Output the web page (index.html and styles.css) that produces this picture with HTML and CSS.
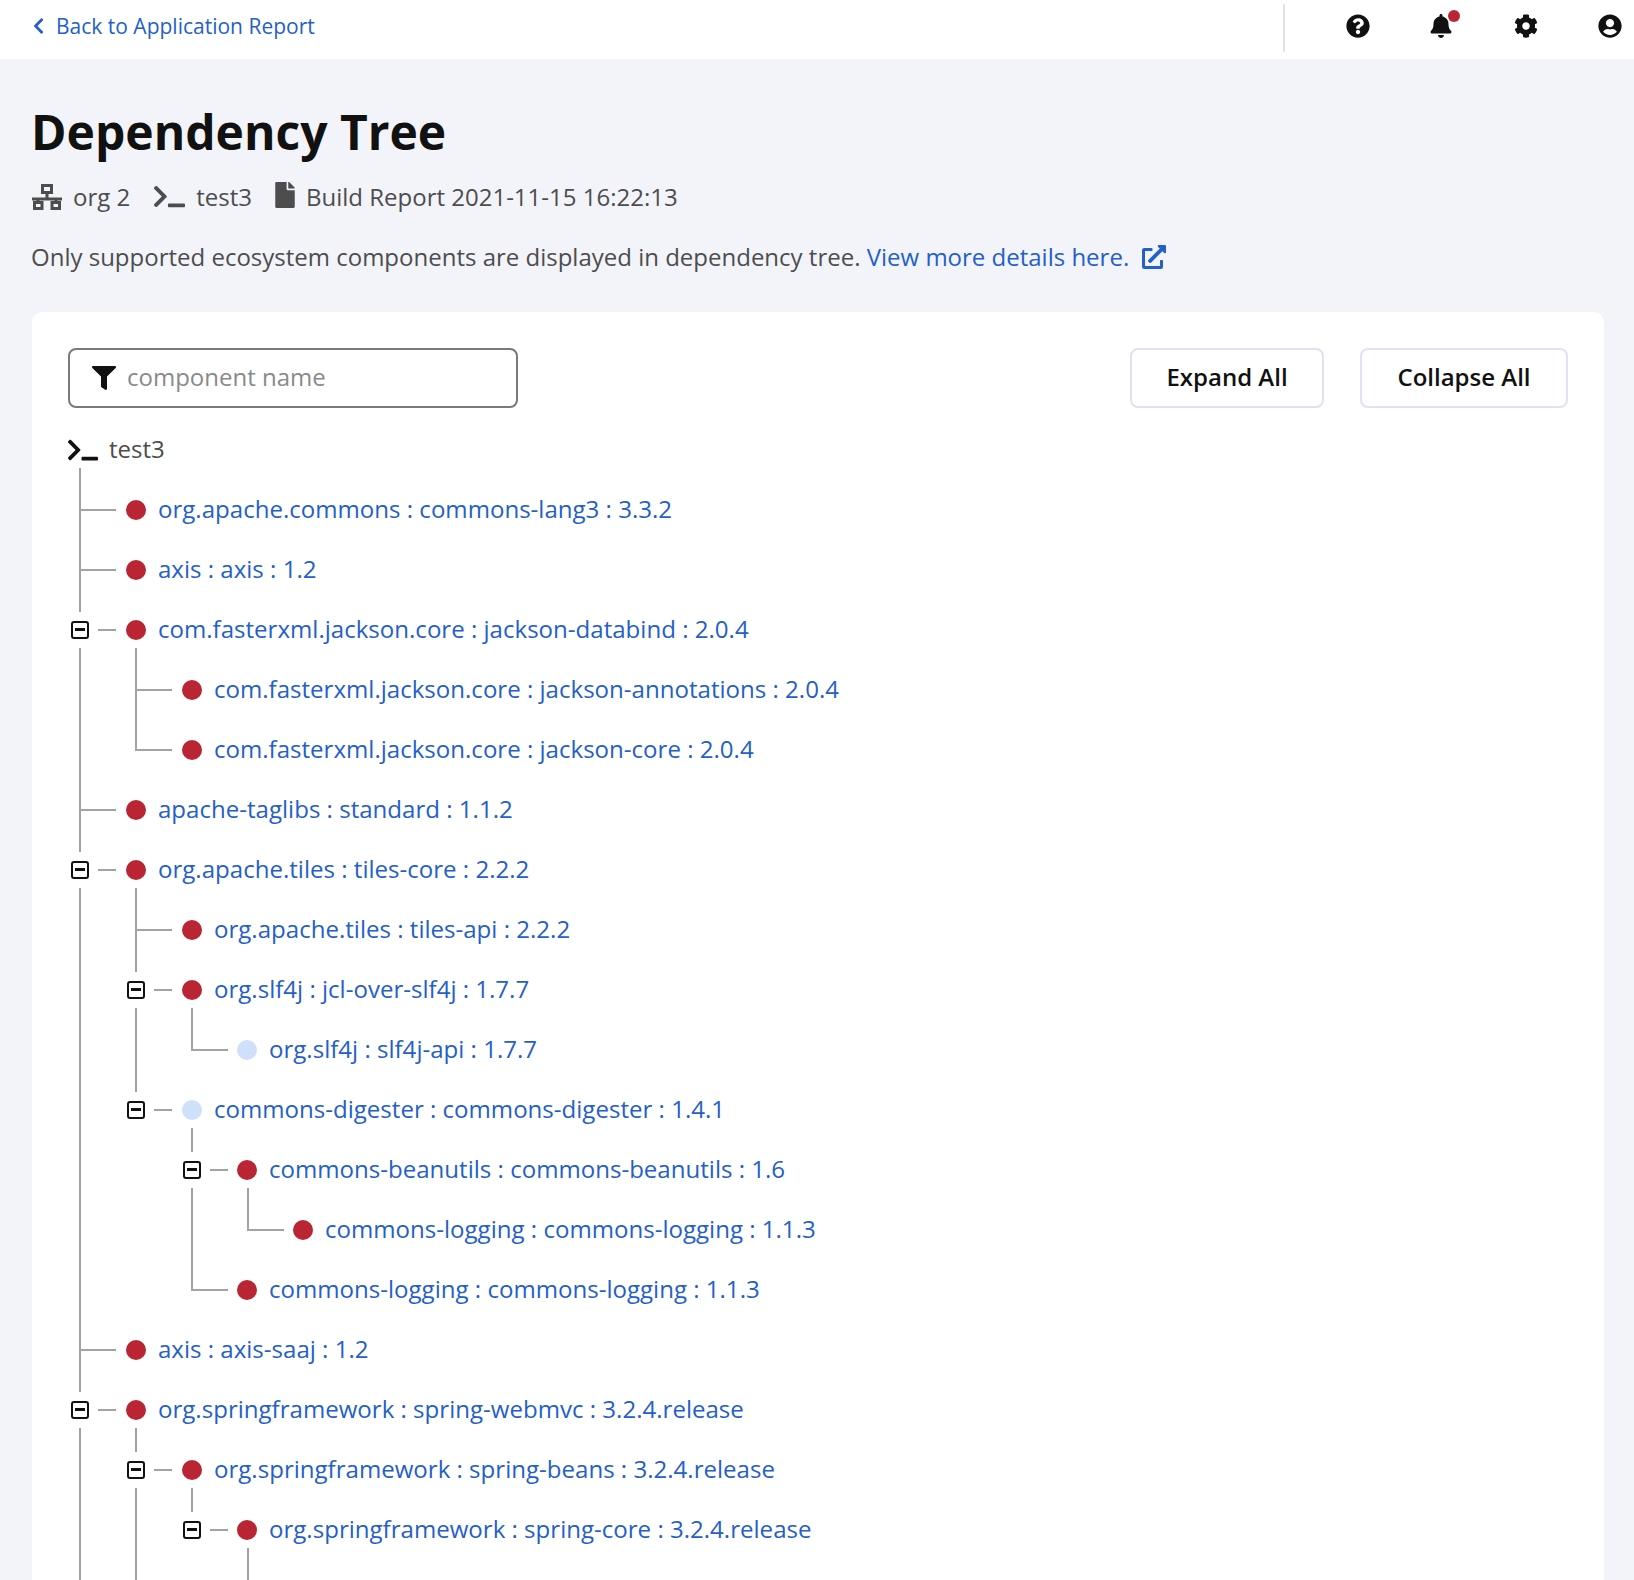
FILE: index.html
```html
<!DOCTYPE html>
<html lang="en">
<head>
    <meta charset="UTF-8">
    <meta name="viewport" content="width=device-width, initial-scale=1.0">
    <title>Dependency Tree</title>
    <link rel="stylesheet" href="styles.css">
</head>
<body>
    <header class="topbar">
        <a class="back" href="#">
            <svg class="back-icon" viewBox="0 0 320 512"><path d="M34.52 239.03L228.87 44.69c9.37-9.37 24.57-9.37 33.94 0l22.67 22.67c9.36 9.36 9.37 24.52.04 33.9L131.49 256l154.02 154.75c9.34 9.38 9.32 24.54-.04 33.9l-22.67 22.67c-9.37 9.37-24.57 9.37-33.94 0L34.52 272.97c-9.37-9.37-9.37-24.57 0-33.94z"/></svg>
            Back to Application Report
        </a>
        <div class="topbar-icons">
            <svg class="top-icon" viewBox="0 0 512 512"><path d="M504 256c0 136.997-111.043 248-248 248S8 392.997 8 256C8 119.083 119.043 8 256 8s248 111.083 248 248zM262.655 90c-54.497 0-89.255 22.957-116.549 63.758-3.536 5.286-2.353 12.415 2.715 16.258l34.699 26.31c5.205 3.947 12.621 3.008 16.665-2.122 17.864-22.658 30.113-35.797 57.303-35.797 20.429 0 45.698 13.148 45.698 32.958 0 14.976-12.363 22.667-32.534 33.976C247.128 238.528 216 254.941 216 296v4c0 6.627 5.373 12 12 12h56c6.627 0 12-5.373 12-12v-1.333c0-28.462 83.186-29.647 83.186-106.667 0-58.002-60.165-102-116.531-102zM256 338c-25.365 0-46 20.635-46 46 0 25.364 20.635 46 46 46s46-20.636 46-46c0-25.365-20.635-46-46-46z"/></svg>
            <span class="bell">
                <svg class="top-icon" viewBox="0 0 448 512"><path d="M224 512c35.32 0 63.97-28.65 63.97-64H160.03c0 35.35 28.65 64 63.97 64zm215.39-149.71c-19.32-20.76-55.47-51.99-55.47-154.29 0-77.7-54.48-139.9-127.94-155.16V32c0-17.67-14.32-32-31.98-32s-31.98 14.33-31.98 32v20.84C118.56 68.1 64.08 130.3 64.08 208c0 102.3-36.15 133.53-55.47 154.29-6 6.45-8.66 14.16-8.61 21.71.11 16.4 12.98 32 32.1 32h383.8c19.12 0 32-15.6 32.1-32 .05-7.55-2.61-15.27-8.61-21.71z"/></svg>
                <span class="badge"></span>
            </span>
            <svg class="top-icon" viewBox="0 0 512 512"><path d="M487.4 315.7l-42.6-24.6c4.3-23.2 4.3-47 0-70.2l42.6-24.6c4.9-2.8 7.1-8.6 5.5-14-11.1-35.6-30-67.8-54.7-94.6-3.8-4.1-10-5.1-14.8-2.3L380.8 110c-17.9-15.4-38.5-27.3-60.8-35.1V25.8c0-5.6-3.9-10.5-9.4-11.7-36.7-8.2-74.3-7.8-109.2 0-5.5 1.2-9.4 6.1-9.4 11.7V75c-22.2 7.9-42.8 19.8-60.8 35.1L88.7 85.5c-4.9-2.8-11-1.9-14.8 2.3-24.7 26.7-43.6 58.9-54.7 94.6-1.7 5.4.6 11.2 5.5 14L67.3 221c-4.3 23.2-4.3 47 0 70.2l-42.6 24.6c-4.9 2.8-7.1 8.6-5.5 14 11.1 35.6 30 67.8 54.7 94.6 3.8 4.1 10 5.1 14.8 2.3l42.6-24.6c17.9 15.4 38.5 27.3 60.8 35.1v49.2c0 5.6 3.9 10.5 9.4 11.7 36.7 8.2 74.3 7.8 109.2 0 5.5-1.2 9.4-6.1 9.4-11.7v-49.2c22.2-7.9 42.8-19.8 60.8-35.1l42.6 24.6c4.9 2.8 11 1.9 14.8-2.3 24.7-26.7 43.6-58.9 54.7-94.6 1.5-5.5-.7-11.3-5.6-14.1zM256 336c-44.1 0-80-35.9-80-80s35.9-80 80-80 80 35.9 80 80-35.9 80-80 80z"/></svg>
            <svg class="top-icon" viewBox="0 0 496 512"><path d="M248 8C111 8 0 119 0 256s111 248 248 248 248-111 248-248S385 8 248 8zm0 96c48.6 0 88 39.4 88 88s-39.4 88-88 88-88-39.4-88-88 39.4-88 88-88zm0 344c-58.7 0-111.3-26.6-146.5-68.2 18.8-35.4 55.6-59.8 98.5-59.8 2.4 0 4.8.4 7.1 1.1 13 4.2 26.6 6.9 40.9 6.9 14.3 0 28-2.7 40.9-6.9 2.3-.7 4.7-1.1 7.1-1.1 42.9 0 79.7 24.4 98.5 59.8C359.3 421.4 306.7 448 248 448z"/></svg>
        </div>
    </header>

    <main class="page">
        <h1>Dependency Tree</h1>

        <div class="meta">
            <svg class="meta-org" viewBox="0 0 30 26"><rect x="10.5" y="1.5" width="9" height="7"/><path d="M15 9v6M0 15h30M6 15v3M24 15v3"/><rect x="2.5" y="18.5" width="7.5" height="6"/><rect x="20" y="18.5" width="7.5" height="6"/></svg>
            <span class="meta-text">org 2</span>
            <svg class="meta-term" viewBox="0 0 640 512"><path d="M257.981 272.971L63.638 467.314c-9.373 9.373-24.569 9.373-33.941 0L7.029 444.647c-9.357-9.357-9.375-24.522-.04-33.901L161.011 256 6.99 101.255c-9.335-9.379-9.317-24.544.04-33.901l22.667-22.667c9.373-9.373 24.569-9.373 33.941 0L257.981 239.03c9.373 9.372 9.373 24.568 0 33.941zM640 456v-32c0-13.255-10.745-24-24-24H312c-13.255 0-24 10.745-24 24v32c0 13.255 10.745 24 24 24h304c13.255 0 24-10.745 24-24z"/></svg>
            <span class="meta-text">test3</span>
            <svg class="meta-file" viewBox="0 0 384 512"><path d="M224 136V0H24C10.7 0 0 10.7 0 24v464c0 13.3 10.7 24 24 24h336c13.3 0 24-10.7 24-24V160H248c-13.2 0-24-10.8-24-24zm160-14.1v6.1H256V0h6.1c6.4 0 12.5 2.5 17 7l97.9 98c4.5 4.5 7 10.6 7 16.9z"/></svg>
            <span class="meta-text">Build Report 2021-11-15 16:22:13</span>
        </div>

        <p class="notice">
            Only supported ecosystem components are displayed in dependency tree.
            <a href="#">View more details here.
                <svg class="ext-icon" viewBox="0 0 512 512"><path d="M432,320H400a16,16,0,0,0-16,16V448H64V128H208a16,16,0,0,0,16-16V80a16,16,0,0,0-16-16H48A48,48,0,0,0,0,112V464a48,48,0,0,0,48,48H400a48,48,0,0,0,48-48V336A16,16,0,0,0,432,320ZM488,0h-128c-21.37,0-32.05,25.91-17,41l35.73,35.73L135,320.37a24,24,0,0,0,0,34L157.67,377a24,24,0,0,0,34,0L435.28,133.32,471,169c15,15,41,4.5,41-17V24A24,24,0,0,0,488,0Z"/></svg>
            </a>
        </p>

        <section class="card">
            <div class="toolbar">
                <label class="filter">
                    <svg class="filter-icon" viewBox="0 0 512 512"><path d="M487.976 0H24.028C2.71 0-8.047 25.866 7.058 40.971L192 225.941V432c0 7.831 3.821 15.17 10.237 19.662l80 55.98C298.02 518.69 320 507.493 320 487.98V225.941l184.947-184.97C520.021 25.896 509.338 0 487.976 0z"/></svg>
                    <input type="text" placeholder="component name">
                </label>
                <div class="toolbar-buttons">
                    <button class="btn-expand">Expand All</button>
                    <button class="btn-collapse">Collapse All</button>
                </div>
            </div>

            <div class="root">
                <svg class="root-icon" viewBox="0 0 640 512"><path d="M257.981 272.971L63.638 467.314c-9.373 9.373-24.569 9.373-33.941 0L7.029 444.647c-9.357-9.357-9.375-24.522-.04-33.901L161.011 256 6.99 101.255c-9.335-9.379-9.317-24.544.04-33.901l22.667-22.667c9.373-9.373 24.569-9.373 33.941 0L257.981 239.03c9.373 9.372 9.373 24.568 0 33.941zM640 456v-32c0-13.255-10.745-24-24-24H312c-13.255 0-24 10.745-24 24v32c0 13.255 10.745 24 24 24h304c13.255 0 24-10.745 24-24z"/></svg>
                <span class="root-name">test3</span>
            </div>

            <ul class="tree top">
                <li><div class="row"><span class="dot red"></span><a href="#">org.apache.commons : commons-lang3 : 3.3.2</a></div></li>
                <li><div class="row"><span class="dot red"></span><a href="#">axis : axis : 1.2</a></div></li>
                <li>
                    <span class="toggle"></span>
                    <div class="row"><span class="dot red"></span><a href="#">com.fasterxml.jackson.core : jackson-databind : 2.0.4</a></div>
                    <ul class="tree">
                        <li><div class="row"><span class="dot red"></span><a href="#">com.fasterxml.jackson.core : jackson-annotations : 2.0.4</a></div></li>
                        <li><div class="row"><span class="dot red"></span><a href="#">com.fasterxml.jackson.core : jackson-core : 2.0.4</a></div></li>
                    </ul>
                </li>
                <li><div class="row"><span class="dot red"></span><a href="#">apache-taglibs : standard : 1.1.2</a></div></li>
                <li>
                    <span class="toggle"></span>
                    <div class="row"><span class="dot red"></span><a href="#">org.apache.tiles : tiles-core : 2.2.2</a></div>
                    <ul class="tree">
                        <li><div class="row"><span class="dot red"></span><a href="#">org.apache.tiles : tiles-api : 2.2.2</a></div></li>
                        <li>
                            <span class="toggle"></span>
                            <div class="row"><span class="dot red"></span><a href="#">org.slf4j : jcl-over-slf4j : 1.7.7</a></div>
                            <ul class="tree">
                                <li><div class="row"><span class="dot pale"></span><a href="#">org.slf4j : slf4j-api : 1.7.7</a></div></li>
                            </ul>
                        </li>
                        <li>
                            <span class="toggle"></span>
                            <div class="row"><span class="dot pale"></span><a href="#">commons-digester : commons-digester : 1.4.1</a></div>
                            <ul class="tree">
                                <li>
                                    <span class="toggle"></span>
                                    <div class="row"><span class="dot red"></span><a href="#">commons-beanutils : commons-beanutils : 1.6</a></div>
                                    <ul class="tree">
                                        <li><div class="row"><span class="dot red"></span><a href="#">commons-logging : commons-logging : 1.1.3</a></div></li>
                                    </ul>
                                </li>
                                <li><div class="row"><span class="dot red"></span><a href="#">commons-logging : commons-logging : 1.1.3</a></div></li>
                            </ul>
                        </li>
                    </ul>
                </li>
                <li><div class="row"><span class="dot red"></span><a href="#">axis : axis-saaj : 1.2</a></div></li>
                <li>
                    <span class="toggle"></span>
                    <div class="row"><span class="dot red"></span><a href="#">org.springframework : spring-webmvc : 3.2.4.release</a></div>
                    <ul class="tree">
                        <li>
                            <span class="toggle"></span>
                            <div class="row"><span class="dot red"></span><a href="#">org.springframework : spring-beans : 3.2.4.release</a></div>
                            <ul class="tree">
                                <li>
                                    <span class="toggle"></span>
                                    <div class="row"><span class="dot red"></span><a href="#">org.springframework : spring-core : 3.2.4.release</a></div>
                                    <ul class="tree">
                                        <li><div class="row"><span class="dot red"></span><a href="#">commons-logging : commons-logging : 1.1.3</a></div></li>
                                    </ul>
                                </li>
                            </ul>
                        </li>
                        <li><div class="row"><span class="dot red"></span><a href="#">org.springframework : spring-web : 3.2.4.release</a></div></li>
                    </ul>
                </li>
                <li><div class="row"><span class="dot red"></span><a href="#">javax.servlet : jstl : 1.2</a></div></li>
            </ul>
        </section>
    </main>
</body>
</html>
```

FILE: styles.css
```css
html, body {
    height: 1580px;
    overflow: hidden;
}
body {
    margin: 0;
    font-family: "Open Sans", sans-serif;
    font-size: 24px;
    color: #4d4d4d;
    background-color: #f3f4f9;
}
a {
    color: #2460c8;
    text-decoration: none;
}
svg {
    fill: currentColor;
    flex: none;
}

/* top bar */
.topbar {
    height: 59px;
    background: white;
    display: flex;
    align-items: flex-start;
    justify-content: space-between;
}
.back {
    display: flex;
    align-items: center;
    height: 52px;
    margin-left: 32px;
    font-size: 21px;
}
.back-icon {
    width: 13px;
    height: 18px;
    margin-right: 11px;
}
.topbar-icons {
    display: flex;
    align-items: center;
    gap: 60px;
    height: 44px;
    margin-top: 4px;
    padding-bottom: 4px;
    padding-left: 61px;
    padding-right: 12px;
    border-left: 2px solid #dfe2f0;
    color: #111;
}
.top-icon {
    display: block;
    height: 24px;
    width: 24px;
}
.bell {
    position: relative;
    left: -1px;
}
.badge {
    position: absolute;
    top: -4px;
    right: -7px;
    width: 12px;
    height: 12px;
    border-radius: 50%;
    background-color: #b92532;
}

/* heading */
.page {
    padding: 0 30px 0 32px;
}
h1 {
    margin: 0 0 0 -1px;
    padding-top: 40px;
    font-size: 48px;
    line-height: 66px;
    font-weight: 700;
    color: #111;
}
.meta {
    display: flex;
    align-items: center;
    height: 33px;
    margin-top: 15px;
}
.meta-org {
    width: 30px;
    height: 26px;
    margin-right: 11px;
    fill: none;
    stroke: currentColor;
    stroke-width: 3;
}
.meta-term {
    width: 31px;
    height: 25px;
    margin-left: 24px;
    margin-right: 11px;
}
.meta-file {
    width: 20px;
    height: 26px;
    margin-left: 23px;
    margin-right: 11px;
    margin-top: -4px;
}
.notice {
    margin: 27px 0 0 -1px;
    line-height: 33px;
}
.ext-icon {
    width: 24px;
    height: 24px;
    margin-left: 7px;
    vertical-align: -3px;
}

/* card */
.card {
    margin-top: 39px;
    background: white;
    border-radius: 10px;
    padding: 36px;
    height: 1400px;
}
.toolbar {
    display: flex;
    justify-content: space-between;
}
.filter {
    display: flex;
    align-items: center;
    box-sizing: border-box;
    width: 450px;
    height: 60px;
    padding-left: 22px;
    border: 2px solid #7a7a7a;
    border-radius: 8px;
}
.filter-icon {
    width: 24px;
    height: 24px;
    color: #111;
    margin-right: 11px;
}
.filter input {
    flex: 1;
    min-width: 0;
    border: none;
    outline: none;
    padding: 0 0 4px;
    font: inherit;
    background: none;
}
.filter input::placeholder {
    color: #8a8a8a;
    opacity: 1;
}
.toolbar-buttons {
    display: flex;
    gap: 36px;
}
button {
    height: 60px;
    padding: 0 0 4px;
    background: white;
    border: 2px solid #dfe2f0;
    border-radius: 8px;
    font-family: inherit;
    font-size: 24px;
    font-weight: 600;
    color: #111;
}
.btn-expand {
    width: 194px;
}
.btn-collapse {
    width: 208px;
}

/* tree */
.root {
    display: flex;
    align-items: center;
    height: 60px;
    margin-top: 12px;
}
.root-icon {
    width: 30px;
    height: 24px;
    color: #111;
    margin-right: 11px;
}
.root-name {
    margin-bottom: 4px;
}
.tree {
    list-style: none;
    margin: 0 0 0 56px;
    padding: 0;
}
.tree.top {
    margin-left: 12px;
}
.tree li {
    position: relative;
}
/* vertical connector */
.tree li::before {
    content: "";
    position: absolute;
    left: -1px;
    top: 0;
    bottom: 0;
    width: 2px;
    background-color: #a3a3a3;
}
.tree li:first-child::before {
    top: -12px;
}
.tree li:last-child::before {
    bottom: auto;
    height: 31px;
}
.tree li:first-child:last-child::before {
    height: 43px;
}
/* horizontal connector */
.tree li::after {
    content: "";
    position: absolute;
    left: 0;
    top: 29px;
    width: 36px;
    height: 2px;
    background-color: #a3a3a3;
}
.row {
    display: flex;
    align-items: center;
    height: 60px;
    padding-left: 46px;
    white-space: nowrap;
}
.tree .tree .tree .row {
    padding-left: 45px;
}
.row a {
    margin-bottom: 4px;
    font-size: 24.07px;
}
.dot {
    width: 20px;
    height: 20px;
    border-radius: 50%;
    margin-right: 12px;
    flex: none;
}
.dot.red {
    background-color: #b92532;
}
.dot.pale {
    background-color: #d0e0fa;
}
.toggle {
    position: absolute;
    z-index: 1;
    left: -9px;
    top: 21px;
    box-sizing: border-box;
    width: 18px;
    height: 18px;
    border: 2px solid #111;
    border-radius: 3px;
    background: white;
    box-shadow: 0 0 0 9px white;
}
.toggle::before {
    content: "";
    position: absolute;
    left: 2px;
    right: 2px;
    top: 5px;
    height: 3px;
    background-color: #111;
}
```
